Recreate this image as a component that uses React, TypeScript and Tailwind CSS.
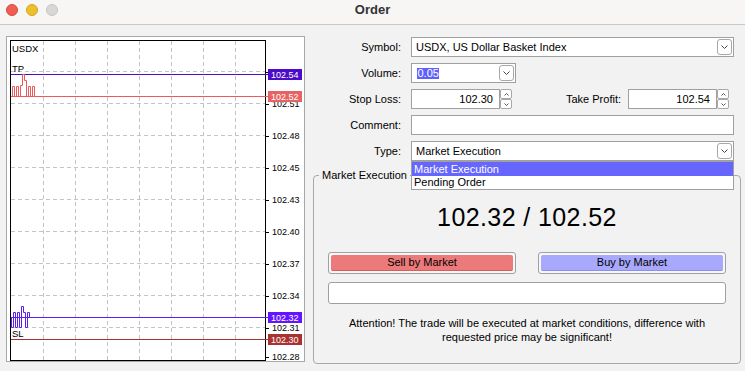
import React from 'react';

const gridY = [71.5, 103.5, 135.5, 167.5, 199.5, 231.5, 263.5, 295.5, 327.5];
const gridX = [43.5, 75.5, 107.5, 139.5, 171.5, 203.5, 235.5];

const axisLabels = [
  { y: 71.5, v: '102.54' },
  { y: 103.5, v: '102.51' },
  { y: 135.5, v: '102.48' },
  { y: 167.5, v: '102.45' },
  { y: 199.5, v: '102.43' },
  { y: 231.5, v: '102.40' },
  { y: 263.5, v: '102.37' },
  { y: 295.5, v: '102.34' },
  { y: 327.5, v: '102.31' },
  { y: 357, v: '102.28' },
];

const tags = [
  { y: 69, v: '102.54', fill: '#4c0bc8' },
  { y: 91, v: '102.52', fill: '#e86262' },
  { y: 312, v: '102.32', fill: '#6414ff' },
  { y: 334, v: '102.30', fill: '#a83232' },
];

function Chart() {
  return (
    <div className="ml-[6px] mt-[11px] w-[299px] h-[326px] border border-[#a8a8a8] bg-white">
      <svg width="297" height="324" viewBox="7 37 297 324" className="block">
        {gridY.map((y) => (
          <line key={y} x1="11" x2="265" y1={y} y2={y} stroke="#c4c4c4" strokeDasharray="4 3" />
        ))}
        {gridX.map((x) => (
          <line key={x} x1={x} x2={x} y1="41" y2="360" stroke="#c4c4c4" strokeDasharray="4 3" />
        ))}
        <rect x="10.5" y="40.5" width="255" height="320" fill="none" stroke="#000" />
        {axisLabels.map((l) => (
          <g key={l.v}>
            <line x1="266" x2="269" y1={Math.round(l.y) + 0.5} y2={Math.round(l.y) + 0.5} stroke="#000" />
            <text x="272" y={l.y + 3.3} fontSize="9" fontFamily="Liberation Sans, sans-serif" fill="#000">
              {l.v}
            </text>
          </g>
        ))}
        <text x="12" y="52" fontSize="9.5" fontFamily="Liberation Sans, sans-serif">USDX</text>
        <text x="12" y="72" fontSize="9.5" fontFamily="Liberation Sans, sans-serif">TP</text>
        <text x="12" y="337" fontSize="9.5" fontFamily="Liberation Sans, sans-serif">SL</text>

        <line x1="11" x2="268" y1="74.5" y2="74.5" stroke="#4c0bc8" />
        <line x1="11" x2="268" y1="96.5" y2="96.5" stroke="#ee5a5a" />
        <line x1="11" x2="268" y1="317.5" y2="317.5" stroke="#5a1ef0" />
        <line x1="11" x2="268" y1="339.5" y2="339.5" stroke="#a83232" />

        <path
          d="M11 96.5 H12.5 V86.5 H14.5 V96.5 H16.5 V86.5 H18.5 V96.5 H20.5 V85.5 H22.5 V74.5 H24.5 V80.5 H26.5 V96.5 H28.5 V86.5 H30.5 V96.5 H32.5 V86.5 H34.5 V96.5 H35"
          fill="none"
          stroke="#ee5a5a"
        />
        <path
          d="M11 317.5 H11.5 V327.5 H13.5 V312.5 H15.5 V327.5 H17.5 V312.5 H19.5 V327.5 H21.5 V306.5 H23.5 V312.5 H25.5 V327.5 H27.5 V312.5 H29.5 V317.5 H32"
          fill="none"
          stroke="#5a1ef0"
        />

        {tags.map((t) => (
          <g key={t.v}>
            <rect x="268" y={t.y} width="34" height="11" fill={t.fill} />
            <text x="271" y={t.y + 8.8} fontSize="9" fontFamily="Liberation Sans, sans-serif" fill="#fff">
              {t.v}
            </text>
          </g>
        ))}
      </svg>
    </div>
  );
}

function Chevron() {
  return (
    <div className="w-[15px] h-[16px] mr-[1px] border border-[#a8a8a8] rounded-[3px] bg-white flex items-center justify-center shrink-0">
      <svg width="7" height="4" viewBox="0 0 7 4">
        <path d="M0.5 0.5 L3.5 3.5 L6.5 0.5" fill="none" stroke="#444" />
      </svg>
    </div>
  );
}

function Spinner() {
  return (
    <div className="flex flex-col w-[12px] h-[20px] shrink-0">
      <div className="h-[10px] border border-[#a8a8a8] rounded-[2px] bg-white flex items-center justify-center">
        <svg width="5" height="3" viewBox="0 0 5 3">
          <path d="M0.5 2.5 L2.5 0.5 L4.5 2.5" fill="none" stroke="#555" />
        </svg>
      </div>
      <div className="h-[10px] border border-[#a8a8a8] rounded-[2px] bg-white flex items-center justify-center">
        <svg width="5" height="3" viewBox="0 0 5 3">
          <path d="M0.5 0.5 L2.5 2.5 L4.5 0.5" fill="none" stroke="#555" />
        </svg>
      </div>
    </div>
  );
}

function Row({ label, children }: { label: string; children: React.ReactNode }) {
  return (
    <div className="flex items-center h-[20px]">
      <div className="w-[88px] text-right">{label}</div>
      <div className="ml-[10px] flex items-center">{children}</div>
    </div>
  );
}

function SpinInput({ value }: { value: string }) {
  return (
    <div className="flex items-center">
      <div className="w-[89px] h-[20px] border border-[#a0a0a0] bg-white text-right pr-[6px] leading-[18px]">{value}</div>
      <Spinner />
    </div>
  );
}

export default function App() {
  return (
    <div className="w-[745px] h-[371px] bg-[#f2f2f2] flex flex-col overflow-hidden text-[11px] text-black [font-family:'Liberation_Sans',Arial,sans-serif]">
      <div className="h-[25px] shrink-0 bg-[#f7f6f5] border-b border-[#c8c8c8] grid grid-cols-[1fr_auto_1fr] items-center pb-[5px]">
        <div className="flex items-center gap-[8px] pl-[6px]">
          <span className="w-[12px] h-[12px] rounded-full bg-[#ee5c54] border border-[#d9493f]" />
          <span className="w-[12px] h-[12px] rounded-full bg-[#ecc02c] border border-[#d3a61b]" />
          <span className="w-[12px] h-[12px] rounded-full bg-[#d7d7d7] border border-[#c6c6c6]" />
        </div>
        <div className="text-[13px] font-bold text-[#333]">Order</div>
        <div />
      </div>

      <div className="flex flex-1">
        <Chart />

        <div className="ml-[8px] w-[428px] pt-[12px]">
          <div className="flex flex-col gap-[6px]">
            <Row label="Symbol:">
              <div className="w-[323px] h-[20px] border border-[#a0a0a0] bg-white flex items-center justify-between pl-[4px]">
                <span>USDX, US Dollar Basket Index</span>
                <Chevron />
              </div>
            </Row>
            <Row label="Volume:">
              <div className="w-[105px] h-[20px] border border-[#a0a0a0] bg-white flex items-center justify-between pl-[5px]">
                <span className="bg-[#6060ff] text-white leading-[11px] px-[0.5px]">0.05</span>
                <Chevron />
              </div>
            </Row>
            <div className="flex items-center h-[20px]">
              <div className="w-[88px] text-right">Stop Loss:</div>
              <div className="ml-[10px]">
                <SpinInput value="102.30" />
              </div>
              <div className="w-[109px] text-right">Take Profit:</div>
              <div className="ml-[7px]">
                <SpinInput value="102.54" />
              </div>
            </div>
            <Row label="Comment:">
              <div className="w-[323px] h-[20px] border border-[#a0a0a0] bg-white" />
            </Row>
            <Row label="Type:">
              <div className="relative w-[323px] h-[20px] border border-[#a0a0a0] bg-white flex items-center justify-between pl-[4px]">
                <span>Market Execution</span>
                <Chevron />
                <div className="absolute left-[-1px] right-[-1px] top-[19px] z-10 border border-[#a0a0a0] bg-white">
                  <div className="h-[14px] leading-[14px] bg-[#6666ff] text-white pl-[2px]">Market Execution</div>
                  <div className="h-[13px] leading-[13px] pl-[2px]">Pending Order</div>
                </div>
              </div>
            </Row>
          </div>

          <fieldset className="mt-[7px] w-[428px] border border-[#a8a8a8] rounded-[4px] pb-[19px]">
            <legend className="ml-[5px] px-[3px] leading-[14px]">Market Execution</legend>
            <div className="px-[14px]">
              <div className="mt-[21px] h-[28px] leading-[28px] text-[25px] tracking-[0.4px] text-center">102.32 / 102.52</div>
              <div className="mt-[21px] grid grid-cols-2 gap-[22px]">
                <div className="h-[22px] rounded-[3px] border border-[#a0a0a0] bg-[#f7f7f7] p-[2px]">
                  <div className="h-full rounded-[2px] bg-[#ec7a7a] border-b border-[#d85e5e] flex items-center justify-center">
                    Sell by Market
                  </div>
                </div>
                <div className="h-[22px] rounded-[3px] border border-[#a0a0a0] bg-[#f7f7f7] p-[2px]">
                  <div className="h-full rounded-[2px] bg-[#a8a8fc] border-b border-[#8e8ef0] flex items-center justify-center">
                    Buy by Market
                  </div>
                </div>
              </div>
              <div className="mt-[8px] h-[22px] rounded-[3px] border border-[#a0a0a0] bg-white" />
              <p className="mt-[12px] text-center leading-[14px]">
                Attention! The trade will be executed at market conditions, difference with
                <br />
                requested price may be significant!
              </p>
            </div>
          </fieldset>
        </div>
      </div>
    </div>
  );
}
